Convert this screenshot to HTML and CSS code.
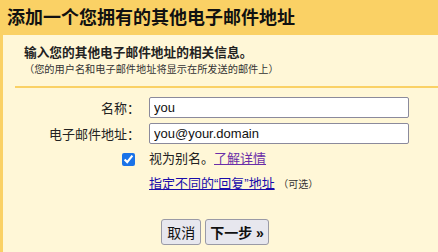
FILE: index.html
```html
<!DOCTYPE html>
<html lang="zh-CN">
<head>
    <meta charset="UTF-8">
    <title>添加一个您拥有的其他电子邮件地址</title>
    <link rel="stylesheet" href="styles.css">
</head>
<body>
    <!-- 标题栏 -->
    <div class="header">添加一个您拥有的其他电子邮件地址</div>

    <div class="panel">
        <div class="intro">
            <div class="intro-title">输入您的其他电子邮件地址的相关信息。</div>
            <div class="intro-note">（您的用户名和电子邮件地址将显示在所发送的邮件上）</div>
        </div>
        <div class="divider"></div>

        <!-- 表单 -->
        <div class="form">
            <label class="form-label" for="name">名称：</label>
            <input class="form-input" id="name" type="text" value="you">

            <label class="form-label" for="email">电子邮件地址：</label>
            <input class="form-input" id="email" type="text" value="you@your.domain">

            <div class="form-check">
                <input type="checkbox" id="alias" checked>
            </div>
            <div class="form-text">视为别名。<a href="#" class="link visited">了解详情</a></div>

            <div></div>
            <div class="form-text"><a href="#" class="link">指定不同的“回复”地址</a> <span class="optional">（可选）</span></div>
        </div>

        <div class="actions">
            <button class="btn">取消</button>
            <button class="btn btn-next">下一步 »</button>
        </div>
    </div>
</body>
</html>
```

FILE: styles.css
```css
/* Estilos generales */
body {
    margin: 0;
    padding: 0;
    background-color: #fff7d7;
    font-family: "Liberation Sans", "Noto Sans CJK SC", sans-serif;
    color: #222;
}

/* Barra de título */
.header {
    background-color: #fad165;
    height: 35px;
    line-height: 36px;
    padding-left: 7px;
    font-size: 18px;
    font-weight: bold;
    color: #111;
}

.panel {
    border-left: 3px solid #fad165;
    min-height: 217px;
    box-sizing: border-box;
}

.intro {
    padding: 9px 0 0 21px;
}

.intro-title {
    font-size: 12.7px;
    font-weight: bold;
    line-height: 18px;
}

.intro-note {
    font-size: 10.2px;
    line-height: 15px;
    color: #333;
}

.divider {
    margin: 9px 0 0 12px;
    border-top: 2px solid #fad165;
}

/* Formulario */
.form {
    display: grid;
    grid-template-columns: 137px 260px;
    column-gap: 9px;
    row-gap: 5px;
    align-items: center;
    margin-top: 9px;
}

.form-label {
    text-align: right;
    font-size: 13px;
    color: #222;
}

.form-input {
    box-sizing: border-box;
    height: 21px;
    width: 260px;
    margin: 0;
    padding: 0 4px;
    border: 1px solid #8b8a9c;
    border-radius: 2px;
    background: #fff;
    font-family: "Liberation Sans", sans-serif;
    font-size: 13px;
    color: #111;
}

.form-check {
    display: flex;
    justify-content: flex-end;
    padding-right: 5px;
}

.form-check input {
    width: 13px;
    height: 13px;
    margin: 0;
    accent-color: #1a73e8;
}

.form-text {
    font-size: 13px;
    line-height: 20px;
}

.link {
    color: #1a0dab;
    text-decoration: underline;
}

.link.visited {
    color: #6a2ea8;
}

.optional {
    font-size: 10px;
    color: #333;
}

/* Botones */
.actions {
    display: flex;
    justify-content: center;
    gap: 4px;
    margin-top: 24px;
    padding-right: 11px;
}

.btn {
    height: 26px;
    padding: 0 5px;
    border: 1px solid #9a9aa6;
    border-radius: 3px;
    background-color: #e7e7ee;
    font-family: "Liberation Sans", "Noto Sans CJK SC", sans-serif;
    font-size: 14px;
    color: #111;
    cursor: pointer;
}

.btn-next {
    font-weight: bold;
    padding: 0 4px;
}
```
